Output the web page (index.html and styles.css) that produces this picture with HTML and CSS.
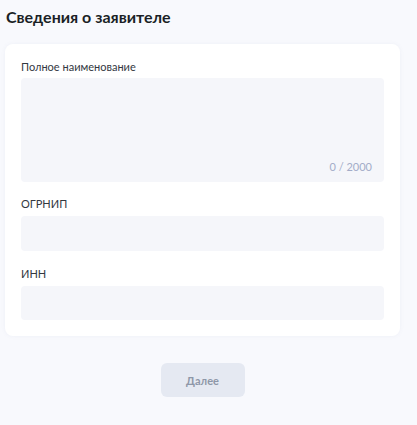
FILE: index.html
```html
<!DOCTYPE html>
<html lang="ru">
<head>
<meta charset="utf-8">
<link rel="stylesheet" href="styles.css">
</head>
<body>
<div class="page">
  <h1 class="title">Сведения о заявителе</h1>
  <div class="card">
    <div class="field">
      <div class="label">Полное наименование</div>
      <div class="textarea"><span class="counter">0 / 2000</span></div>
    </div>
    <div class="field">
      <div class="label">ОГРНИП</div>
      <div class="input"></div>
    </div>
    <div class="field field-last">
      <div class="label">ИНН</div>
      <div class="input"></div>
    </div>
  </div>
  <div class="actions">
    <button class="btn">Далее</button>
  </div>
</div>
</body>
</html>
```
FILE: styles.css
```css
html, body {
  margin: 0;
  padding: 0;
  background: #f8f9fd;
  font-family: Lato, "Noto Sans", sans-serif;
  color: #0b1f33;
}
.page {
  width: 395px;
  padding: 0 0 0 5px;
}
.title {
  margin: 0;
  padding: 7px 0 0 1px;
  font-size: 16px;
  line-height: 20px;
  font-weight: 700;
  color: #1a1f26;
  height: 37px;
}
.card {
  background: #fff;
  border-radius: 8px;
  padding: 16px;
  box-shadow: 0 0 4px rgba(110,130,170,0.08);
  display: flex;
  flex-direction: column;
  gap: 15px;
}
.field {
  display: flex;
  flex-direction: column;
}
.label {
  font-size: 11px;
  line-height: 14px;
  color: #33383f;
  margin-bottom: 4px;
}
.field + .field .label {
  margin-bottom: 5px;
}
.field-last {
  margin-top: 1px;
}
.textarea {
  height: 104px;
  background: #f5f6fa;
  border-radius: 4px;
  display: flex;
  align-items: flex-end;
  justify-content: flex-end;
  padding: 0 12px 9px 0;
  box-sizing: border-box;
}
.counter {
  font-size: 11px;
  color: #a3acc8;
}
.input {
  height: 35px;
  background: #f5f6fa;
  border-radius: 4px;
}
.field-last .input {
  height: 34px;
}
.actions {
  display: flex;
  justify-content: center;
  padding-top: 27px;
}
.btn {
  width: 84px;
  height: 34px;
  border: none;
  border-radius: 6px;
  background: #e5e9f2;
  color: #8e97a8;
  font-family: Lato, "Noto Sans", sans-serif;
  font-size: 11px;
  font-weight: 700;
  padding: 0;
}
```
